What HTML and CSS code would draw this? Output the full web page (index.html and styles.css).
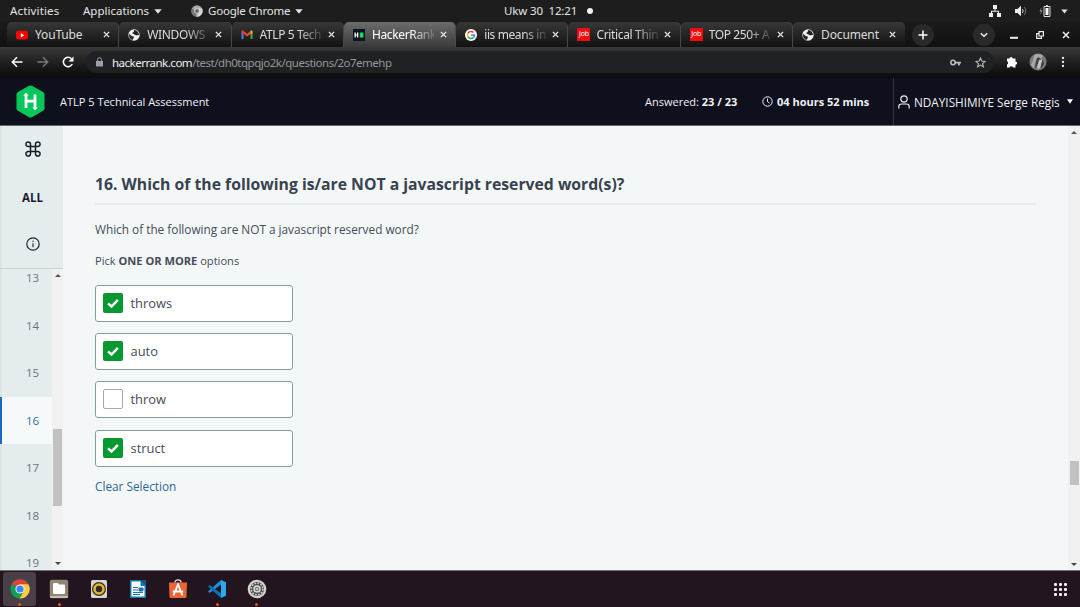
FILE: index.html
```html
<!DOCTYPE html>
<html lang="en">
<head>
<meta charset="utf-8">
<title>HackerRank</title>
<link rel="stylesheet" href="styles.css">
</head>
<body>
<svg class="defs" width="0" height="0">
  <symbol id="close" viewBox="0 0 8 8"><path d="M1 1l6 6M7 1L1 7" stroke="#eee" stroke-width="1.5"/></symbol>
  <symbol id="caret" viewBox="0 0 8 5"><path d="M0.300 .3h7.400L4 4.700z" fill="currentColor"/></symbol>
  <symbol id="globe" viewBox="0 0 12 12"><circle cx="6" cy="6" r="5.700" fill="#f1f1f1"/><path d="M1 4.700L4 7.200l2 .3-.4 1.600-1 1.900C2.300 10.300 1 8.500 1 6zM6.300 1c-1 1 .2 1.500-.9 2.200-1.200.2-1.500 1.300-.2 1.700 1.600-.2 1.900 1.700 3.600 1.300L11 6c0-2.500-1.800-4.600-4.700-5z" fill="#222"/></symbol>
  <symbol id="check" viewBox="0 0 20 20"><path d="M5 10.300l3.500 3.200 6.400-6.700" fill="none" stroke="#fff" stroke-width="2.500"/></symbol>
</svg>
<div class="topbar">
  <span class="activities">Activities</span>
  <span class="applications">Applications</span>
  <svg class="caret" width="8" height="5"><use href="#caret"/></svg>
  <svg class="app-icon" width="12" height="12" viewBox="0 0 12 12"><circle cx="6" cy="6" r="5.700" fill="#aaa"/><path d="M6 6L1 3.500A5.700 5.700 0 0 0 5 11.600z" fill="#777"/><path d="M6 3.500h5A5.700 5.700 0 0 1 5.500 11.700L8.200 7z" fill="#d5d5d5"/><circle cx="6" cy="6" r="2.400" fill="#666" stroke="#eee" stroke-width=".7"/></svg>
  <span class="appname">Google Chrome</span>
  <svg class="caret" width="8" height="5"><use href="#caret"/></svg>
  <span class="clock">Ukw 30&nbsp; 12:21</span>
  <i class="dot"></i>
  <div class="tray">
    <svg width="12" height="12" viewBox="0 0 12 12" fill="#eee"><path d="M4 0h4v4H6.500v1.700H10V8h2v4H8V8h1V6.700H3V8h1v4H0V8h2V5.700h3.500V4H4z"/></svg>
    <svg width="12" height="12" viewBox="0 0 12 12"><path d="M0 4h2.500L6 .8v10.400L2.500 8H0z" fill="#eee"/><path d="M7.300 4c1 1.200 1 2.800 0 4" fill="none" stroke="#ddd"/><path d="M9 2c2.200 2.500 2.200 5.500 0 8" fill="none" stroke="#777"/></svg>
    <svg width="12" height="12" viewBox="0 0 12 12"><path d="M2.500 2L.5 6.500H2L1 10l2.500-4.500H2z" fill="#999"/><path d="M5 1.500h6v10H5zM7 .5h2" fill="none" stroke="#ddd"/><path d="M6.500 3h3v7h-3z" fill="#fff"/></svg>
    <svg class="caret" width="7" height="5"><use href="#caret"/></svg>
  </div>
</div>
<div class="tabs">
  <div class="tab"><svg class="fav" viewBox="0 0 12 12"><rect y="1.800" width="12" height="8.800" rx="2" fill="#f00"/><path d="M4.800 4l3.400 2.200-3.400 2.200z" fill="#fff"/></svg><span class="label nofade">YouTube</span><svg class="x"><use href="#close"/></svg></div>
  <div class="tab"><svg class="fav"><use href="#globe"/></svg><span class="label">WINDOWS</span><svg class="x"><use href="#close"/></svg></div>
  <div class="tab"><svg class="fav" viewBox="0 0 12 12"><path d="M.5 3v7h2V4.500z" fill="#4285f4"/><path d="M11.500 3v7h-2V4.500z" fill="#34a853"/><path d="M.5 3.500V2.700C.5 1.300 1.600 1.500 2.500 2L6 4.700 9.500 2v3L6 7.500 2.500 5z" fill="#ea4335"/><path d="M9.500 2c1-.8 2-.4 2 .8V4l-2 1.400z" fill="#fbbc04"/></svg><span class="label tight">ATLP 5 Tech</span><svg class="x"><use href="#close"/></svg></div>
  <div class="tab active"><svg class="fav" viewBox="0 0 12 12"><path d="M0 0h12v12H0z" fill="#0d1421"/><path d="M1.500 3.500h1.300v2h1.200v-2h1.300v5H4v-2H2.800v2H1.500z" fill="#fff"/><path d="M6.800 3.500h3.700v5H6.800z" fill="#1ed760"/></svg><span class="label">HackerRank</span><svg class="x"><use href="#close"/></svg></div>
  <div class="tab"><svg class="fav" viewBox="0 0 12 12"><circle cx="6" cy="6" r="6" fill="#fff"/><g fill="none" stroke-width="1.600"><path d="M2.900 4.400A3.500 3.500 0 0 1 8.500 3.500" stroke="#ea4335"/><path d="M2.900 7.600a3.500 3.500 0 0 1 0-3.200" stroke="#fbbc05"/><path d="M8.500 8.500A3.500 3.500 0 0 1 2.900 7.600" stroke="#34a853"/><path d="M6 6h3.500a3.500 3.500 0 0 1-1 2.500" stroke="#4285f4"/></g></svg><span class="label tight">iis means in</span><svg class="x"><use href="#close"/></svg></div>
  <div class="tab"><span class="fav job">Job</span><span class="label">Critical Thin</span><svg class="x"><use href="#close"/></svg></div>
  <div class="tab"><span class="fav job">Job</span><span class="label tight">TOP 250+ A</span><svg class="x"><use href="#close"/></svg></div>
  <div class="tab last"><svg class="fav"><use href="#globe"/></svg><span class="label nofade">Document</span><svg class="x"><use href="#close"/></svg></div>
  <span class="round plus"><svg width="10" height="10"><path d="M5 .5v9M.5 5h9" stroke="#fff" stroke-width="1.500"/></svg></span>
  <span class="round down"><svg width="8" height="6"><path d="M.8 1.200L4 4.200l3.200-3" fill="none" stroke="#eee" stroke-width="1.500"/></svg></span>
  <svg class="win" width="8" height="8"><path d="M0 6.800h8" stroke="#eee" stroke-width="2"/></svg>
  <svg class="win" width="8" height="8"><path d="M3 .6h4.400V5H3zM2.500 2.600H.7v4.800h4.700V5" fill="none" stroke="#eee" stroke-width="1.200"/></svg>
  <svg class="win" width="8" height="8"><use href="#close"/></svg>
</div>
<div class="toolbar">
  <svg class="nav" viewBox="0 0 12 12"><path d="M11.500 6h-10M6 1.300L1.300 6 6 10.700" fill="none" stroke="#fff" stroke-width="1.500"/></svg>
  <svg class="nav" viewBox="0 0 12 12"><path d="M.5 6h10M6 1.300L10.700 6 6 10.700" fill="none" stroke="#777" stroke-width="1.400"/></svg>
  <svg class="nav" viewBox="0 0 12 12"><path d="M10.300 8A4.700 4.700 0 1 1 9.500 2.700" fill="none" stroke="#fff" stroke-width="1.500"/><path d="M11.500.5v5h-5z" fill="#fff"/></svg>
  <div class="omnibox">
    <svg class="lock" width="7" height="10" viewBox="0 0 7 10"><path d="M0 4h7v5.500H0z" fill="#9aa0a6"/><path d="M1.600 4V2.500a1.900 1.900 0 0 1 3.800 0V4" fill="none" stroke="#9aa0a6"/></svg>
    <span class="url"><b>hackerrank.com</b>/test/dh0tqpqjo2k/questions/2o7emehp</span>
    <svg class="key" width="11" height="7" viewBox="0 0 11 7"><circle cx="3" cy="3.500" r="2.200" fill="none" stroke="#bbb" stroke-width="1.600"/><path d="M5 2.700h6v1.800H9.800V6.500H8V4.500H5z" fill="#bbb"/></svg>
    <svg width="11" height="11" viewBox="0 0 11 11"><path d="M5.500 1l1.300 3.100 3.300.3-2.500 2.200.8 3.300-2.900-1.800-2.900 1.800.8-3.300L.9 4.400l3.300-.3z" fill="none" stroke="#bbb" stroke-width="1.100"/></svg>
  </div>
  <svg class="puzzle" width="12" height="12" viewBox="0 0 12 12"><path d="M1 2.500h2.500a1.600 1.600 0 1 1 3.200 0h2.800v3a1.600 1.600 0 1 1 0 3.200v2.800H7a1.700 1.700 0 0 0-3.300 0H1V8.500a1.700 1.700 0 0 0 0-3.200z" fill="#fff"/></svg>
  <svg class="avatar" width="18" height="18" viewBox="0 0 18 18"><circle cx="9" cy="9" r="8.500" fill="#7d7d7d"/><path d="M5 3c2-3 7-2 9 0l-2 2-4 0-2 4-1 6-3-3 2-4z" fill="#aaa"/><path d="M11 5c3 1 3 5 1 7l-2 4-2-1 1-5z" fill="#c4c4c4"/><path d="M8 5c2-1 4 0 4 2l-2-.5-1 4-2 5-1-1 1-5zM14 6l1 5-3 5 0-5z" fill="#404040"/></svg>
  <svg width="4" height="12" fill="#eee"><circle cx="2" cy="2" r="1.150"/><circle cx="2" cy="6" r="1.150"/><circle cx="2" cy="10" r="1.150"/></svg>
</div>
<header class="header">
  <svg class="logo" width="31" height="33" viewBox="0 0 31 33"><path d="M14 .8q1.500-.8 3 0L28 7q1.500.9 1.500 2.600v13.600q0 1.700-1.500 2.600l-11 6.400q-1.500.8-3 0L3 25.800q-1.500-.9-1.500-2.600V9.600Q1.500 7.900 3 7z" fill="#07c65a"/><path d="M11 10V23M20 9.500v13.500M11 16.200h9" fill="none" stroke="#fff" stroke-width="2.800"/><path d="M8.300 10.500L11 7.500l2.700 3zM17.300 22.500h5.400L20 25.500z" fill="#fff"/></svg>
  <span class="title">ATLP 5 Technical Assessment</span>
  <span class="answered">Answered: <b>23 / 23</b></span>
  <svg class="timer" width="11" height="11" viewBox="0 0 11 11" fill="none" stroke="#eee"><circle cx="5.500" cy="5.500" r="4.700"/><path d="M5.500 2.500v3.200L7.500 7"/></svg>
  <b class="time">04 hours 52 mins</b>
  <div class="user">
    <svg width="12" height="14" viewBox="0 0 12 14" fill="none" stroke="#eee" stroke-width="1.200"><circle cx="6" cy="4" r="3.200"/><path d="M.8 13.500v-2Q.8 9 3.500 9h5q2.700 0 2.700 2.500v2"/></svg>
    <span class="username">NDAYISHIMIYE Serge Regis</span>
    <svg class="caret" width="6" height="5" viewBox="0 0 8 6"><path d="M0 0h8L4 6z" fill="#fff"/></svg>
  </div>
</header>
<main class="main">
  <aside class="sidebar">
    <div class="side-top">
      <svg class="cmd" width="16" height="16" viewBox="0 0 16 16" fill="none" stroke="#1a1d29" stroke-width="1.500"><path d="M5.500 5.500h5v5h-5zM5.500 5.500H3.300a2.300 2.300 0 1 1 2.200-2.200zM10.500 5.500V3.300a2.300 2.300 0 1 1 2.200 2.200zM10.500 10.500h2.200a2.300 2.300 0 1 1-2.200 2.200zM5.500 10.500v2.200a2.300 2.300 0 1 1-2.200-2.200z"/></svg>
      <b class="all">ALL</b>
      <svg class="info" width="14" height="14" viewBox="0 0 14 14"><circle cx="7" cy="7" r="6.200" fill="none" stroke="#1f2430" stroke-width="1.200"/><path d="M7 6.200v4M7 3.700v1.400" stroke="#39424e" stroke-width="1.300"/></svg>
    </div>
    <div class="side-list">
      <div class="numbers"><span>13</span><span>14</span><span>15</span><span class="current">16</span><span>17</span><span>18</span><span>19</span></div>
      <div class="scroll side-scroll"><i class="arrow up"></i><i class="thumb"></i><i class="arrow"></i></div>
    </div>
  </aside>
  <section class="content">
    <h1>16. Which of the following is/are NOT a javascript reserved word(s)?</h1>
    <p class="question">Which of the following are NOT a javascript reserved word?</p>
    <p class="pick">Pick <b>ONE OR MORE</b> options</p>
    <div class="options">
      <div class="option"><svg class="box on"><use href="#check"/></svg><span>throws</span></div>
      <div class="option"><svg class="box on"><use href="#check"/></svg><span>auto</span></div>
      <div class="option"><i class="box"></i><span>throw</span></div>
      <div class="option"><svg class="box on"><use href="#check"/></svg><span>struct</span></div>
    </div>
    <a class="clear">Clear Selection</a>
  </section>
  <div class="scroll page-scroll"><i class="arrow up"></i><i class="thumb"></i><i class="arrow"></i></div>
</main>
<footer class="dock">
  <div class="app focus run"><svg viewBox="0 0 20 20"><path d="M10 10L1.800 5A9.600 9.600 0 0 1 18.300 5z" fill="#db4437"/><path d="M10 10L1.800 5A9.600 9.600 0 0 0 9.500 19.600L14 12z" fill="#0f9d58"/><path d="M10 5.300h8.400A9.600 9.600 0 0 1 9.500 19.600L14 12z" fill="#ffcd40"/><circle cx="10" cy="10" r="4.600" fill="#f1f1f1"/><circle cx="10" cy="10" r="3.600" fill="#4285f4"/></svg></div>
  <div class="app run"><svg viewBox="0 0 20 20"><rect x=".8" y=".8" width="18.400" height="18.400" rx="2" fill="#8f8676"/><path d="M1 17h18v1q0 1-1 1H2q-1 0-1-1z" fill="#c6beb0"/><path d="M4 5q0-1 1-1h4l1 1.500h5q1 0 1 1v7.500q0 1-1 1H5q-1 0-1-1z" fill="#fff"/></svg></div>
  <div class="app"><svg viewBox="0 0 20 20"><rect x="2" y="1" width="16" height="18" rx="1.500" fill="#d9d4cf"/><circle cx="10" cy="10" r="7" fill="#2e2b28"/><circle cx="10" cy="10" r="4.500" fill="none" stroke="#e4b82e" stroke-width="2.600"/><circle cx="10" cy="10" r="2" fill="#302c28"/></svg></div>
  <div class="app"><svg viewBox="0 0 20 20"><path d="M2 1h11l5 5v13H2z" fill="#1675aa"/><path d="M3.500 2.500h9V7h4v10.500h-13z" fill="#fff"/><path d="M13 1h5v5z" fill="#0e5a86"/><path d="M5 8.500h5M5 11h5M5 13.500h10M5 15.500h7M11 9h4v3h-4z" stroke="#1675aa" fill="#1675aa"/></svg></div>
  <div class="app"><svg viewBox="0 0 20 20"><path d="M7 3.500c0-3.500 6-3.500 6 0" fill="none" stroke="#ddd" stroke-width="1.300"/><path d="M1 3.500h18l-.5 14q0 1.500-1.500 1.500H3q-1.500 0-1.500-1.500z" fill="#ed6534"/><path d="M5.500 16.500L10 5.500l4.500 11M4.800 12.500h10.400" fill="none" stroke="#fff" stroke-width="1.800"/></svg></div>
  <div class="app run"><svg viewBox="0 0 20 20"><path d="M14 1l5 2.300v13.400L14 19z" fill="#2aa8f2"/><path d="M14 1L1 12.500 2.700 14 14 5.500z" fill="#1f90db"/><path d="M14 19L1 7.500 2.700 6 14 14.500z" fill="#0673b7"/></svg></div>
  <div class="app run"><svg viewBox="0 0 20 20"><circle cx="10" cy="10" r="9.300" fill="#d4d1ce"/><circle cx="10" cy="10" r="7" fill="#4b4947"/><circle cx="10" cy="10" r="5.800" fill="none" stroke="#ccc" stroke-width="1.600" stroke-dasharray="1.800 1.200"/><circle cx="10" cy="10" r="3" fill="#777" stroke="#ddd" stroke-width="1.500"/><circle cx="10" cy="10" r="1" fill="#ddd"/></svg></div>
  <div class="grid"><i></i><i></i><i></i><i></i><i></i><i></i><i></i><i></i><i></i></div>
</footer>
</body>
</html>
```

FILE: styles.css
```css
* { box-sizing: border-box; }
body { margin: 0; width: 1080px; height: 607px; overflow: hidden; display: flex; flex-direction: column; font-family: "Open Sans", sans-serif; background: #f3f7f7; }
svg { display: block; flex: none; }
.defs { position: absolute; }
.topbar, .tabs, .toolbar { font-family: "Noto Sans", sans-serif; white-space: nowrap; }
.topbar { height: 22px; flex: none; display: flex; align-items: center; padding-bottom: 1px; background: #1d1d1d; color: #e4e4e4; font-size: 11.5px; }
.topbar .caret { margin-top: 1px; }
.activities { margin-left: 10px; width: 73px; letter-spacing: .15px; }
.applications { width: 71px; }
.app-icon { margin-left: 29px; }
.appname { margin-left: 5px; width: 87px; letter-spacing: -.2px; }
.clock { margin-left: 201px; width: 74px; letter-spacing: -.15px; }
.dot { width: 6px; height: 6px; border-radius: 50%; background: #f2f2f2; margin-left: 9px; }
.tray { margin-left: auto; margin-right: 12px; display: flex; align-items: center; gap: 14px; }
.tray svg:nth-child(3) { margin-left: -2px; }
.tray .caret { margin-left: -4px; }
.tabs { height: 25px; flex: none; display: flex; align-items: center; padding-left: 7px; background: linear-gradient(#1b1b1b, #111); }
.tab { width: 112.300px; flex: none; height: 25px; display: flex; align-items: center; padding-left: 9px; background: linear-gradient(#373737, #121212); color: #dcdcdc; font-size: 12px; border-radius: 5px 5px 0 0; border-right: 1px solid #484848; }
.tab.active { background: linear-gradient(#6c6c6c, #3a3a3a); color: #fff; }
.tab.last { border-right: 0; }
.fav { width: 12px; height: 12px; flex: none; }
.job { background: #ee0d0d; color: #fff; font-size: 7px; line-height: 12px; text-align: center; width: 13px; height: 13px; margin-right: -1px; letter-spacing: -.2px; }
.label { width: 62px; margin-left: 7px; letter-spacing: -.35px; -webkit-mask-image: linear-gradient(90deg, #000 62%, rgba(0, 0, 0, .15)); mask-image: linear-gradient(90deg, #000 62%, rgba(0, 0, 0, .15)); }
.label.tight { letter-spacing: -.4px; }
.label.nofade { letter-spacing: -.15px; -webkit-mask-image: none; mask-image: none; }
.x { width: 7px; height: 7px; margin-left: 6px; }
.round { width: 22px; height: 22px; border-radius: 50%; background: #292929; display: flex; align-items: center; justify-content: center; flex: none; }
.plus { margin-left: 6.600px; }
.down { margin-left: 39px; }
.win { margin-left: 18px; }
.down + .win { margin-left: 15px; }
.toolbar { height: 31px; flex: none; display: flex; align-items: center; padding: 0 13px 1px 11px; background: linear-gradient(#393939, #161616 70%, #0c0c0c); }
.nav { width: 12px; height: 12px; margin-right: 13.500px; }
.omnibox { width: 908px; height: 22px; flex: none; margin-left: -1.500px; border-radius: 11px; background: #202124; display: flex; align-items: center; padding: 0 8px 0 10px; color: #969696; font-size: 11.5px; }
.url { margin-left: 9px; margin-right: auto; letter-spacing: -.49px; }
.url b { font-weight: 400; color: #f0f0f0; }
.key { margin-right: 14px; }
.puzzle { margin-left: 12px; }
.avatar { margin: 0 14px 0 11px; }
.header { height: 48px; flex: none; display: flex; align-items: center; background: #0e101d; border-bottom: 1px solid #65676f; color: #f0f0f3; font-size: 11px; white-space: nowrap; }
.logo { margin-left: 15px; }
.title { margin-left: 14px; width: 585px; }
.answered { width: 117px; }
.time { margin-left: 4px; width: 116px; }
.user { height: 47px; flex: 1; display: flex; align-items: center; padding-left: 4px; border-left: 1px solid #33353f; }
.username { margin-left: 4px; width: 153px; font-size: 11.75px; padding-top: 1px; }
.main { flex: 1; min-height: 0; display: flex; background: #f3f7f7; }
.sidebar { width: 63px; flex: none; display: flex; flex-direction: column; background: linear-gradient(90deg, #dde4e6 2px, #e5ecee 2px); overflow: hidden; }
.side-top { height: 143px; flex: none; display: flex; flex-direction: column; align-items: center; padding: 15px 0 0 2px; border-bottom: 1px solid #c9d2d6; color: #1a1d29; }
.all { font-size: 11.5px; line-height: 16px; margin-top: 33px; }
.info { margin-top: 31px; }
.side-list { flex: 1; min-height: 0; display: flex; overflow: hidden; }
.numbers { width: 52px; margin-top: -15px; flex: none; }
.numbers span { display: block; height: 47.500px; line-height: 48px; padding-left: 26px; color: #68747e; font-size: 11.5px; }
.numbers .current { background: #f5f9fa; color: #35699a; border-left: 2px solid #1b67c1; padding-left: 24px; }
.scroll { background: #f1f1f1; display: flex; flex-direction: column; align-items: center; }
.side-scroll { width: 11px; padding: 5px 1px 5px; }
.arrow { border: 3px solid transparent; border-top: 3px solid #444; border-bottom: 0; width: 0; height: 0; }
.arrow.up { border-top: 0; border-bottom: 3px solid #555; }
.thumb { width: 9px; background: #c1c1c1; }
.side-scroll .thumb { height: 77px; margin-top: 152px; margin-bottom: auto; }
.content { flex: 1; padding: 48px 32px 0 32px; color: #454c59; }
h1 { margin: 0; height: 31px; font-size: 15.750px; line-height: 20px; color: #39424e; border-bottom: 2px solid #e6ebed; white-space: nowrap; }
p { margin: 0; }
.question { font-size: 11.8px; line-height: 18px; margin-top: 15px; }
.pick { font-size: 11.1px; line-height: 18px; margin-top: 14px; }
.options { display: flex; flex-direction: column; gap: 11.200px; margin-top: 15px; }
.option { width: 198px; height: 37px; display: flex; align-items: center; padding: 0 0 1px 7px; border: 1px solid #83a09b; border-radius: 3px; background: #fff; font-size: 12.9px; color: #454c59; }
.box { width: 20px; height: 20px; border: 1px solid #a5acb0; border-radius: 2px; margin-right: 7.500px; }
.box.on { background: #079832; border: 0; }
.clear { display: block; margin-top: 11px; font-size: 11.8px; line-height: 17px; color: #2e6795; }
.page-scroll { width: 12px; padding: 5px 1px 4px; }
.page-scroll .thumb { height: 24px; margin-top: 327px; margin-bottom: auto; }
.dock { height: 37px; flex: none; display: flex; align-items: center; background: #23151f; border-top: 1px solid #777078; padding: 0 13px 0 3px; }
.app { width: 33px; height: 34px; margin-right: 6.500px; flex: none; display: flex; flex-direction: column; align-items: center; padding-top: 7px; border-radius: 3px; gap: 4px; }
.app svg { width: 20px; height: 20px; }
.focus { background: #494047; }
.run::after { content: ""; width: 3px; height: 3px; border-radius: 50%; background: #e95420; flex: none; }
.grid { margin-left: auto; display: grid; grid-template-columns: repeat(3, 3px); gap: 2px; }
.grid i { width: 3px; height: 3px; background: #eee; border-radius: 1px; }
```
